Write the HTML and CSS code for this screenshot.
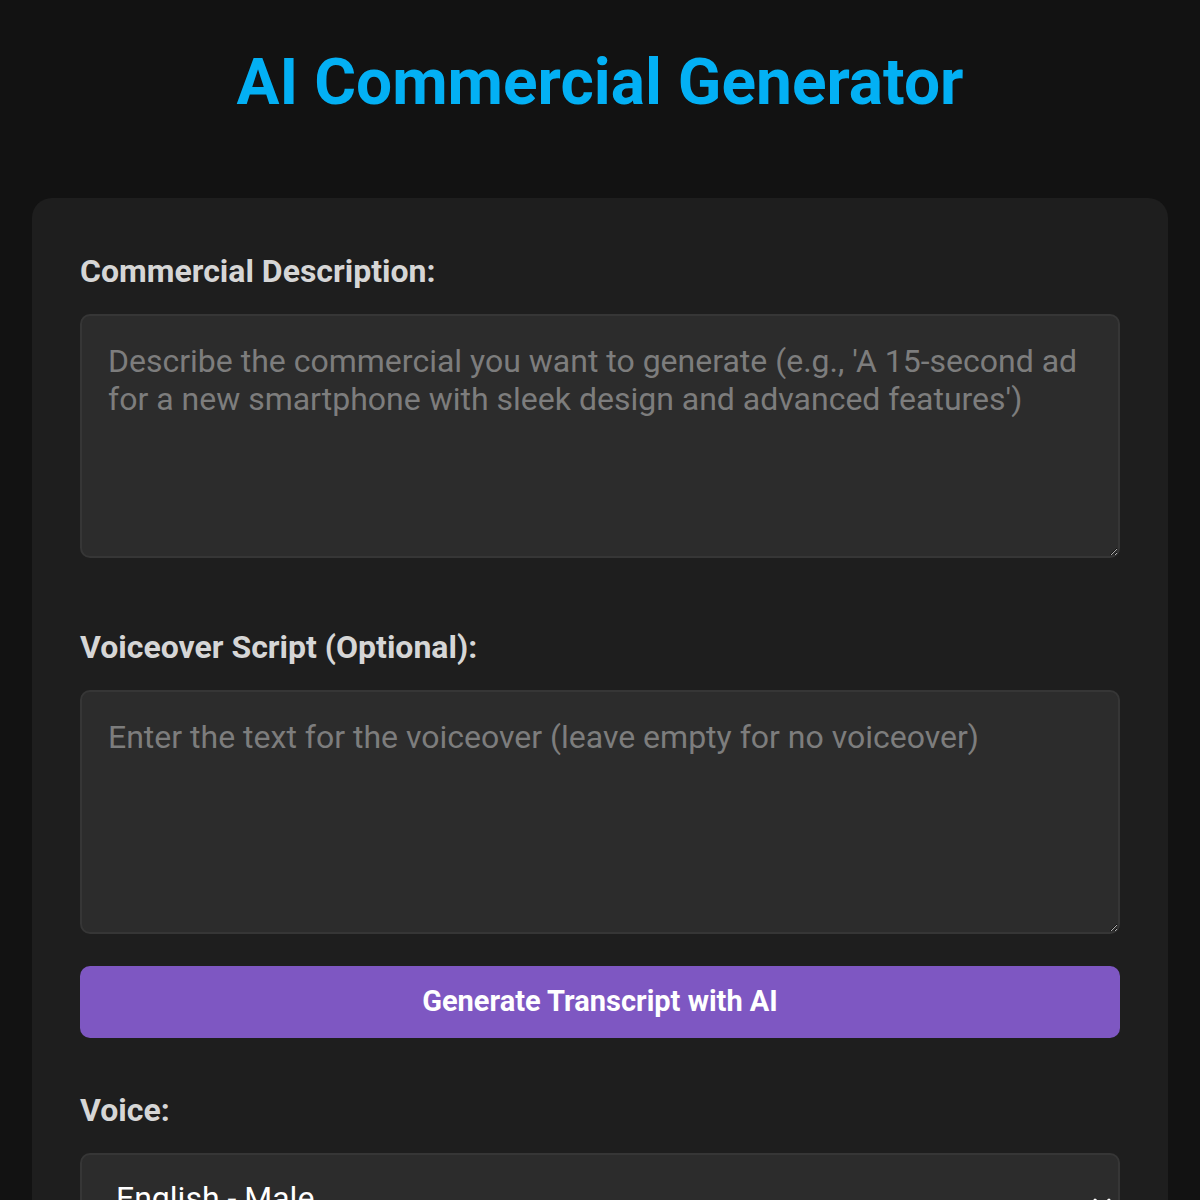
FILE: index.html
```html
<!DOCTYPE html>
<html lang="en">
<head>
<meta charset="utf-8">
<title>AI Commercial Generator</title>
<link rel="stylesheet" href="styles.css">
</head>
<body>
<div class="page">
  <h1 class="title">AI Commercial Generator</h1>
  <div class="card">
    <div class="group">
      <label class="label" for="desc">Commercial Description:</label>
      <textarea id="desc" class="field field-desc" placeholder="Describe the commercial you want to generate (e.g., 'A 15-second ad for a new smartphone with sleek design and advanced features')"></textarea>
    </div>
    <div class="group">
      <label class="label" for="vo">Voiceover Script (Optional):</label>
      <textarea id="vo" class="field field-vo" placeholder="Enter the text for the voiceover (leave empty for no voiceover)"></textarea>
      <button class="btn" type="button">Generate Transcript with AI</button>
    </div>
    <div class="group">
      <label class="label" for="voice">Voice:</label>
      <div class="select-wrap">
        <select id="voice" class="select">
          <option>English - Male</option>
          <option>English - Female</option>
        </select>
        <svg class="chevron" width="24" height="24" viewBox="0 0 24 24" fill="none" stroke="#ffffff" stroke-width="3" stroke-linecap="round" stroke-linejoin="round"><path d="M5 9l7 7 7-7"/></svg>
      </div>
    </div>
  </div>
</div>
</body>
</html>
```

FILE: styles.css
```css
* { box-sizing: border-box; }
html, body { margin: 0; padding: 0; }
body {
  background: #121212;
  font-family: Roboto, "Liberation Sans", sans-serif;
  color: #e0e0e0;
}
.page {
  width: 1200px;
  padding: 45px 32px 0;
}
.title {
  margin: 0 0 78px;
  text-align: center;
  font-size: 64px;
  font-weight: 700;
  line-height: 75px;
  color: #03b0f4;
}
.card {
  background: #1e1e1e;
  border-radius: 20px;
  padding: 54px 48px 60px;
  display: flex;
  flex-direction: column;
}
.group {
  display: flex;
  flex-direction: column;
}
.group + .group { margin-top: 70px; }
.group:last-child { margin-top: 53px; }
.label {
  font-size: 32px;
  font-weight: 700;
  line-height: 38px;
  color: #d6d6d6;
  margin-bottom: 24px;
}
.field {
  display: block;
  width: 100%;
  background: #2c2c2c;
  border: 2px solid #363636;
  border-radius: 10px;
  padding: 26px 26px 25px;
  font-family: Roboto, "Liberation Sans", sans-serif;
  font-size: 32px;
  line-height: 38px;
  color: #e0e0e0;
  resize: vertical;
  outline: none;
}
.field::placeholder { color: #7d7d7d; }
.field-desc { height: 244px; }
.field-vo { height: 244px; }
.btn {
  margin-top: 32px;
  height: 72px;
  width: 100%;
  border: none;
  border-radius: 10px;
  background: #7e57c2;
  color: #ffffff;
  font-family: Roboto, "Liberation Sans", sans-serif;
  font-size: 29px;
  font-weight: 700;
  padding-bottom: 4px;
}
.select-wrap { position: relative; }
.select {
  width: 100%;
  -webkit-appearance: none;
  appearance: none;
  background: #2c2c2c;
  border: 2px solid #363636;
  border-radius: 10px;
  padding: 24px 34px;
  font-family: Roboto, "Liberation Sans", sans-serif;
  font-size: 32px;
  line-height: 38px;
  color: #ffffff;
}
.chevron {
  position: absolute;
  right: 6px;
  top: 38px;
}
```
